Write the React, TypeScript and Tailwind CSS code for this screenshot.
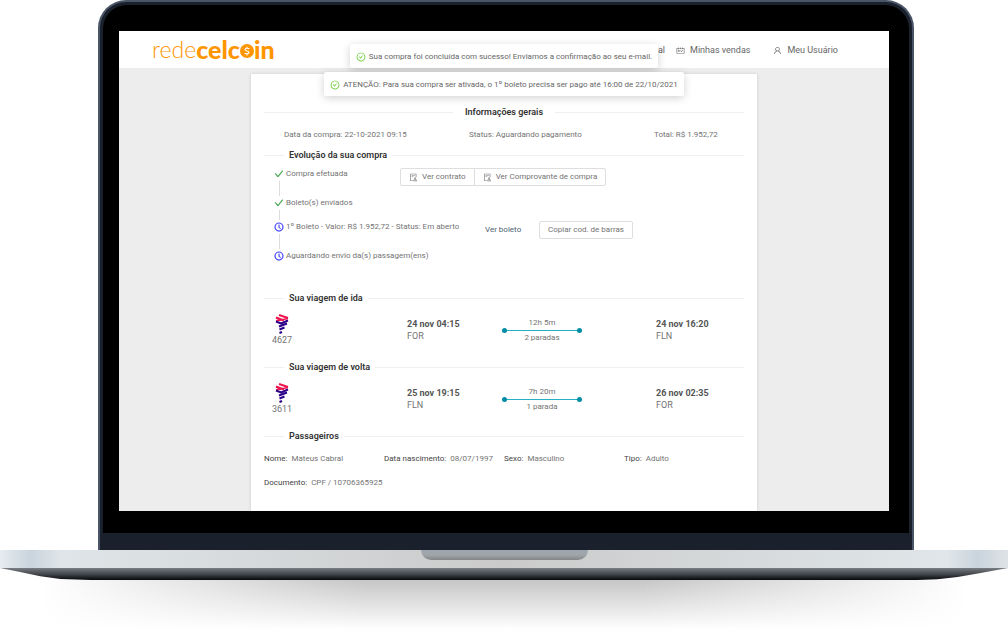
import React from 'react';
import {
  AiOutlineAudit,
  AiOutlineCheck,
  AiOutlineCheckCircle,
  AiOutlineClockCircle,
  AiOutlineSchedule,
  AiOutlineUser,
} from 'react-icons/ai';

type Flight = {
  title: string;
  number: string;
  departure: string;
  from: string;
  duration: string;
  stops: string;
  arrival: string;
  to: string;
};

const flights: Flight[] = [
  {
    title: 'Sua viagem de ida',
    number: '4627',
    departure: '24 nov 04:15',
    from: 'FOR',
    duration: '12h 5m',
    stops: '2 paradas',
    arrival: '24 nov 16:20',
    to: 'FLN',
  },
  {
    title: 'Sua viagem de volta',
    number: '3611',
    departure: '25 nov 19:15',
    from: 'FLN',
    duration: '7h 20m',
    stops: '1 parada',
    arrival: '26 nov 02:35',
    to: 'FOR',
  },
];

const passenger = [
  { label: 'Nome:', value: 'Mateus Cabral' },
  { label: 'Data nascimento:', value: '08/07/1997' },
  { label: 'Sexo:', value: 'Masculino' },
  { label: 'Tipo:', value: 'Adulto' },
  { label: 'Documento:', value: 'CPF / 10706365925' },
];

const messages = [
  'Sua compra foi concluída com sucesso! Enviamos a confirmação ao seu e-mail.',
  'ATENÇÃO: Para sua compra ser ativada, o 1º boleto precisa ser pago até 16:00 de 22/10/2021',
];

const Logo: React.FC = () => (
  <a href="#" className="flex items-center font-['Lato'] text-[25px] leading-6 text-[#ff9500]">
    <span className="text-[23px] font-light">rede</span>
    <span className="font-black">celc</span>
    <svg viewBox="0 0 24 24" className="mt-1 size-[14px]" aria-label="o">
      <circle cx="12" cy="12" r="12" fill="#ff9500" />
      <path
        d="M16 8.5C15 7 9 6.500 8.500 9.200C8 12.500 16 11.500 15.500 14.800C15 17.500 9 17 8 15.500M12 4.500V7M12 17V19.500"
        fill="none"
        stroke="#fff"
        strokeWidth="2"
      />
    </svg>
    <span className="font-black">in</span>
  </a>
);

const Header: React.FC = () => (
  <header className="flex h-[37px] items-center justify-between bg-white pr-[51px] pb-px pl-[33px]">
    <Logo />
    <nav className="flex items-center pt-[2px] text-[9px] leading-3 text-[#666]">
      <a href="#">nal</a>
      <a href="#" className="ml-[11px] flex items-center gap-[5px]">
        <AiOutlineSchedule className="size-[9px]" />
        Minhas vendas
      </a>
      <a href="#" className="ml-[23px] flex items-center gap-[5px]">
        <AiOutlineUser className="size-[9px]" />
        Meu Usuário
      </a>
    </nav>
  </header>
);

const Messages: React.FC = () => (
  <div className="absolute inset-x-0 top-[13px] flex flex-col items-center gap-1">
    {messages.map((text) => (
      <div
        key={text}
        role="status"
        className="flex h-6 items-center gap-[3px] rounded-[2px] bg-white px-[6px] pt-px text-[#666] shadow-[0_2px_8px_rgba(0,0,0,0.18)]"
      >
        <AiOutlineCheckCircle className="size-[10px] text-[#52c41a]" />
        {text}
      </div>
    ))}
  </div>
);

const Divider: React.FC<{ children: React.ReactNode; center?: boolean }> = ({ children, center }) => (
  <div className={center ? 'flex items-center gap-3' : 'flex items-center gap-[5px]'}>
    <span className={center ? 'h-px flex-1 bg-[#efefef]' : 'h-px w-5 bg-[#efefef]'} />
    <h2 className="text-[9px] leading-3 font-semibold text-[#333]">{children}</h2>
    <span className="h-px flex-1 bg-[#efefef]" />
  </div>
);

const Button: React.FC<{ children: React.ReactNode; className?: string }> = ({ children, className }) => (
  <button
    type="button"
    className={`flex h-[18px] items-center gap-1 border border-[#dedede] bg-white px-2 whitespace-nowrap ${className ?? ''}`}
  >
    {children}
  </button>
);

const Step: React.FC<{ done?: boolean; last?: boolean; children: React.ReactNode }> = ({ done, last, children }) => (
  <li className="flex gap-[2px]">
    <div className="flex flex-col items-center">
      <span className="flex h-3 items-center">
        {done ? (
          <AiOutlineCheck className="size-[10px] stroke-[#2e9a3a] stroke-[30px] text-[#2e9a3a]" />
        ) : (
          <AiOutlineClockCircle className="size-[10px] stroke-[#2f2fff] stroke-[30px] text-[#2f2fff]" />
        )}
      </span>
      {!last && <span className="my-px w-px flex-1 bg-[#dcdcdc]" />}
    </div>
    {children}
  </li>
);

const Steps: React.FC = () => (
  <ol className="mt-[7px] pl-[10px]">
    <Step done>
      <div className="flex h-[29px] items-start">
        <p className="w-[114px]">Compra efetuada</p>
        <Button className="rounded-l-[2px]">
          <AiOutlineAudit className="size-[9px]" />
          Ver contrato
        </Button>
        <Button className="-ml-px rounded-r-[2px]">
          <AiOutlineAudit className="size-[9px]" />
          Ver Comprovante de compra
        </Button>
      </div>
    </Step>
    <Step done>
      <p className="h-6">Boleto(s) enviados</p>
    </Step>
    <Step>
      <div className="flex h-[29px] items-start">
        <p className="w-[199px]">1º Boleto - Valor: R$ 1.952,72 - Status: Em aberto</p>
        <a href="#" className="w-[54px] leading-[18px] text-[#4d5f73]">
          Ver boleto
        </a>
        <Button className="rounded-[2px]">Copiar cod. de barras</Button>
      </div>
    </Step>
    <Step last>
      <p>Aguardando envio da(s) passagem(ens)</p>
    </Step>
  </ol>
);

const AirlineMark: React.FC = () => (
  <svg viewBox="0 0 14 20" className="mx-auto h-5 w-[14px]" fill="none" strokeWidth="2" aria-hidden="true">
    <path d="M4 1L13 4M1 3.500L9 6.500" stroke="#ed1650" />
    <path d="M13 4.500L1 7M1 4L5 5.500" stroke="#ed1650" strokeWidth="1.500" />
    <path d="M1 7.500L6 9.500L13 6.500M4 12.500L12 9.500M4.500 15.500L9.500 13.500M4.500 19L7 18" stroke="#2a0088" />
  </svg>
);

const FlightRow: React.FC<{ flight: Flight }> = ({ flight }) => (
  <section className="mb-[15px]">
    <Divider>{flight.title}</Divider>
    <div className="mt-[10px] grid grid-cols-[143px_95px_1fr_88px]">
      <div className="w-9 text-center text-[9px]">
        <AirlineMark />
        {flight.number}
      </div>
      <div className="pt-1 text-[9px]">
        <p className="font-bold text-[#555]">{flight.departure}</p>
        <p>{flight.from}</p>
      </div>
      <div className="w-20 pt-1 text-center">
        <p className="leading-[10px]">{flight.duration}</p>
        <div className="flex items-center">
          <span className="size-[5px] rounded-full bg-[#008ca5]" />
          <span className="h-px flex-1 bg-[#26b0c4]" />
          <span className="size-[5px] rounded-full bg-[#008ca5]" />
        </div>
        <p className="leading-[10px]">{flight.stops}</p>
      </div>
      <div className="pt-1 text-[9px]">
        <p className="font-bold text-[#555]">{flight.arrival}</p>
        <p>{flight.to}</p>
      </div>
    </div>
  </section>
);

const PurchaseCard: React.FC = () => (
  <main className="mx-auto mt-[6px] max-w-[506px] bg-white px-[13px] pt-8 pb-[22px] shadow-[0_0_3px_rgba(0,0,0,0.15)]">
    <Divider center>Informações gerais</Divider>
    <div className="mt-[11px] mb-2 grid grid-cols-[185px_185px_1fr] pl-5">
      <p>Data da compra: 22-10-2021 09:15</p>
      <p>Status: Aguardando pagamento</p>
      <p>Total: R$ 1.952,72</p>
    </div>
    <Divider>Evolução da sua compra</Divider>
    <Steps />
    <div className="mt-[30px]">
      {flights.map((flight) => (
        <FlightRow key={flight.number} flight={flight} />
      ))}
    </div>
    <Divider>Passageiros</Divider>
    <dl className="mt-[11px] grid grid-cols-4 gap-y-3">
      {passenger.map((item) => (
        <div key={item.label} className="flex gap-1 whitespace-nowrap">
          <dt className="text-[#444]">{item.label}</dt>
          <dd>{item.value}</dd>
        </div>
      ))}
    </dl>
  </main>
);

const App: React.FC = () => (
  <div className="overflow-hidden bg-white font-['Roboto','Noto_Sans',sans-serif] text-[8px] leading-3 text-[#737373]">
    {/* lid */}
    <div className="mr-[94px] ml-[98px] rounded-t-[28px] border-2 border-b-0 border-[#4a5568] bg-[#1a202c] px-[3px] pt-[3px] pb-[17px]">
      <div className="rounded-t-[24px] bg-black pt-[26px] pr-5 pb-[22px] pl-4">
        <div className="relative overflow-hidden bg-[#ededed]">
          <Header />
          <PurchaseCard />
          <Messages />
        </div>
      </div>
    </div>
    {/* base */}
    <div className="h-[18px] bg-[linear-gradient(90deg,#e6ecf1_0%,#c9d4dd_3%,#dfe5e8_6%,#cacaca_50%,#e0e6e9_94%,#c9d4dd_97%,#dfe3e6_100%)]">
      <div className="mx-auto h-[10px] w-[167px] rounded-b-[12px] bg-linear-to-b from-[#9ca6ae] via-[#a0a5a9] to-[#858585]" />
    </div>
    <div className="h-3 bg-linear-to-b from-[#787e84] via-[#45484c] to-[#08090d] [clip-path:polygon(0_0,100%_0,97%_45%,95%_75%,93%_94%,91%_100%,9%_100%,6%_92%,4%_68%,2%_34%)]" />
    <div className="mx-10 h-[55px] bg-linear-to-b from-[#c6c6c6] to-white to-90% mask-[linear-gradient(90deg,transparent,black_35%,black_65%,transparent)]" />
  </div>
);

export default App;
